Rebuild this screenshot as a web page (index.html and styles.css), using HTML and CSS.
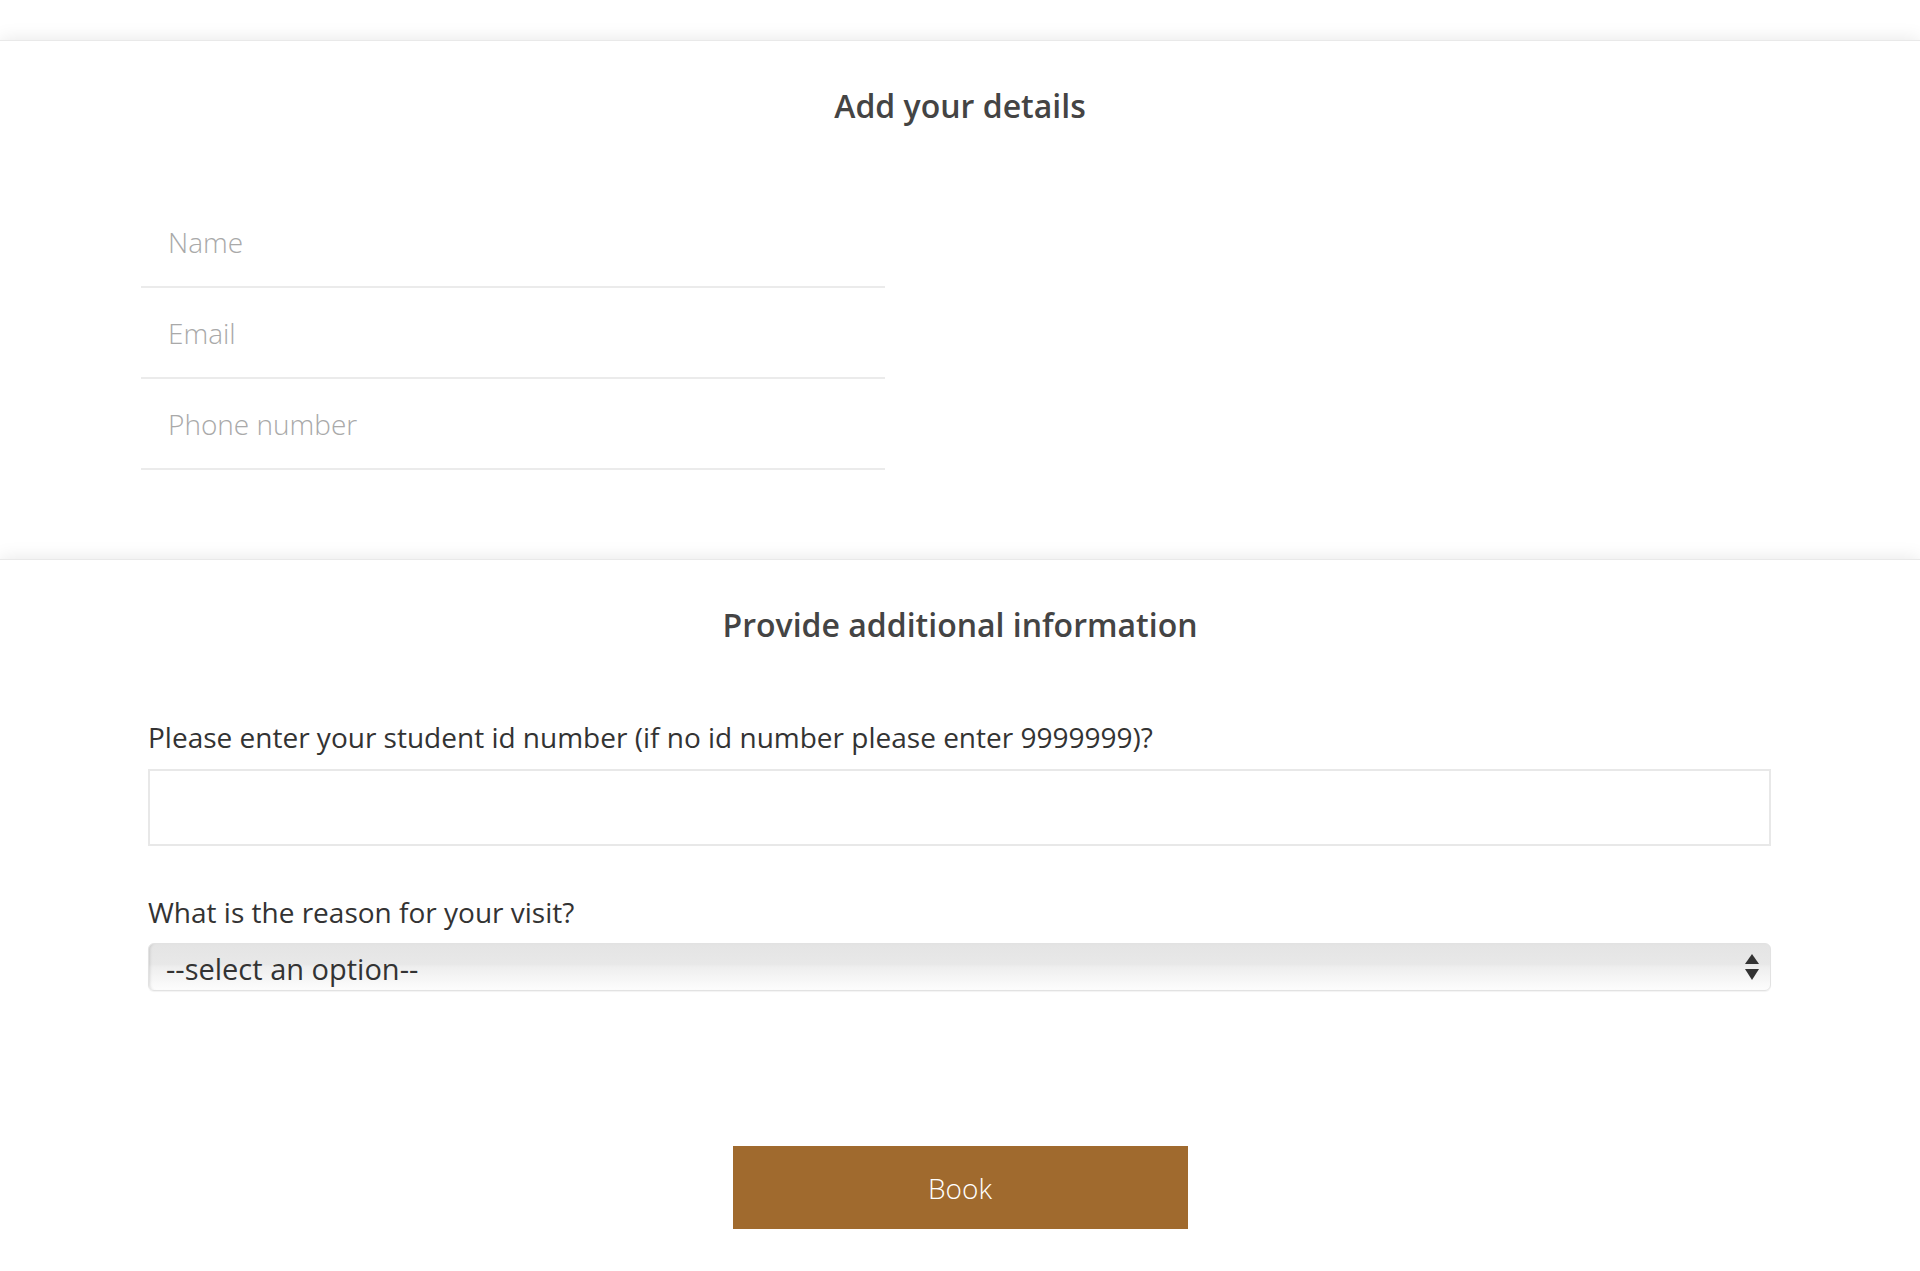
FILE: index.html
```html
<!DOCTYPE html>
<html lang="en">
<head>
    <meta charset="UTF-8">
    <meta name="viewport" content="width=device-width, initial-scale=1.0">
    <title>Book an appointment</title>
    <link rel="stylesheet" href="styles.css">
</head>
<body>
    <div class="top"></div>

    <div class="section">
        <h2 class="title">Add your details</h2>
        <div class="contact">
            <input type="text" class="line-input" placeholder="Name" />
            <input type="email" class="line-input" placeholder="Email" />
            <input type="tel" class="line-input" placeholder="Phone number" />
        </div>
    </div>

    <div class="section section-last">
        <h2 class="title">Provide additional information</h2>
        <div class="extra">
            <label class="question" for="student-id">Please enter your student id number (if no id number please enter 9999999)?</label>
            <input type="text" id="student-id" class="box-input" />

            <label class="question question-second" for="reason">What is the reason for your visit?</label>
            <div class="select-wrap">
                <select id="reason" class="select">
                    <option>--select an option--</option>
                    <option>Advice</option>
                    <option>Other</option>
                </select>
                <svg class="arrows" width="14" height="27" viewBox="0 0 14 27">
                    <path d="M7 0 L14 10 L0 10 Z" fill="#333" />
                    <path d="M0 15 L14 15 L7 26 Z" fill="#333" />
                </svg>
            </div>
        </div>
        <div class="actions">
            <button class="book">Book</button>
        </div>
    </div>
</body>
</html>
```

FILE: styles.css
```css
body {
    margin: 0;
    background-color: #fff;
    font-family: "Open Sans", "Noto Sans", sans-serif;
}
.top {
    height: 40px;
    background-color: #fff;
}
.section {
    background-color: #fff;
    border-top: 1px solid #e9e9e9;
    box-shadow: 0 0 18px rgba(0, 0, 0, 0.1);
    padding: 45px 0 89px;
}
.section-last {
    padding-bottom: 60px;
}
.title {
    margin: 0;
    text-align: center;
    font-size: 32px;
    line-height: 40px;
    font-weight: 600;
    color: #444;
}
.contact {
    display: flex;
    flex-direction: column;
    width: 744px;
    margin: 71px 0 0 141px;
}
.line-input {
    box-sizing: border-box;
    height: 91px;
    padding: 0 27px;
    border: none;
    border-bottom: 2px solid #ebebeb;
    outline: none;
    font-family: inherit;
    font-size: 28px;
    font-weight: 300;
    color: #333;
    background: transparent;
}
.line-input::placeholder {
    color: #a9a9a9;
}
.extra {
    display: flex;
    flex-direction: column;
    margin: 74px 149px 0 148px;
}
.question {
    font-size: 28px;
    line-height: 36px;
    color: #333;
    margin-bottom: 14px;
}
.question-second {
    margin-top: 48px;
    margin-bottom: 13px;
}
.box-input {
    box-sizing: border-box;
    height: 77px;
    border: 2px solid #e8e8e8;
    outline: none;
    padding: 0 18px;
    font-family: inherit;
    font-size: 28px;
}
.select-wrap {
    position: relative;
}
.select {
    -webkit-appearance: none;
    appearance: none;
    box-sizing: border-box;
    width: 100%;
    height: 48px;
    padding: 2px 50px 0 17px;
    border: 1px solid #e2e2e2;
    border-radius: 6px;
    font-family: inherit;
    font-size: 29px;
    color: #333;
    background: linear-gradient(#e4e4e4 0%, #e8e8e8 44%, #eeeeee 50%, #f7f7f7 80%, #fdfdfd 100%);
    box-shadow: inset 3px 0 3px -2px rgba(0, 0, 0, 0.12), 0 1px 1px rgba(0, 0, 0, 0.05);
    outline: none;
}
.arrows {
    position: absolute;
    right: 12px;
    top: 11px;
    pointer-events: none;
}
.actions {
    display: flex;
    justify-content: center;
    margin-top: 155px;
}
.book {
    width: 455px;
    height: 83px;
    border: none;
    background-color: #a06a2e;
    color: #fff;
    font-family: inherit;
    font-size: 28px;
    font-weight: 300;
    cursor: pointer;
}
.book:hover {
    background-color: #8d5c25;
}
```
